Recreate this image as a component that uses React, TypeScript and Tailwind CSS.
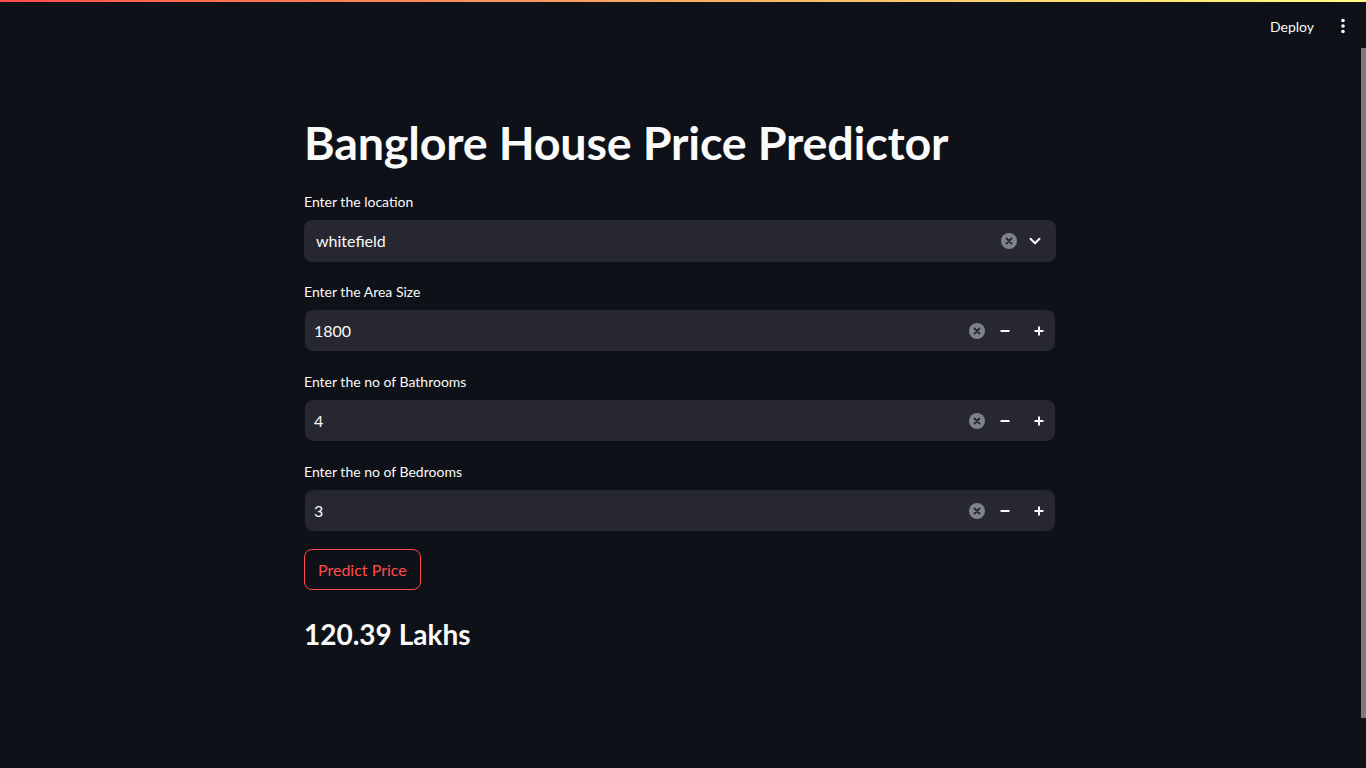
import React from "react";

const ClearIcon = () => (
  <svg width="16" height="16" viewBox="0 0 16 16">
    <circle cx="8" cy="8" r="8" fill="#7f818d" />
    <path d="M5.5 5.5 L10.5 10.5 M10.5 5.5 L5.5 10.5" stroke="#262730" strokeWidth="1.8" strokeLinecap="round" />
  </svg>
);

const Chevron = () => (
  <svg width="14" height="14" viewBox="0 0 14 14">
    <path d="M2.5 4.8 L7 9.2 L11.5 4.8" stroke="#fafafa" strokeWidth="2" fill="none" strokeLinecap="round" strokeLinejoin="round" />
  </svg>
);

const Minus = () => (
  <svg width="12" height="12" viewBox="0 0 12 12">
    <path d="M1.5 6 H10.5" stroke="#fafafa" strokeWidth="2" />
  </svg>
);

const Plus = () => (
  <svg width="12" height="12" viewBox="0 0 12 12">
    <path d="M1.5 6 H10.5 M6 1.5 V10.5" stroke="#fafafa" strokeWidth="2" />
  </svg>
);

const NumberField = ({ label, value }: { label: string; value: string }) => (
  <div className="flex flex-col">
    <div className="h-[18px] text-[14px] leading-[18px] text-[#fafafa]">{label}</div>
    <div className="mt-[9px] mx-px flex h-[41px] items-center rounded-lg bg-[#262730]">
      <div className="flex-1 pl-[9px] text-[16px] text-[#fafafa]">{value}</div>
      <ClearIcon />
      <div className="ml-[4px] flex w-[32px] justify-center">
        <Minus />
      </div>
      <div className="ml-[2px] flex w-[32px] justify-center">
        <Plus />
      </div>
    </div>
  </div>
);

const App = () => {
  return (
    <div className="relative h-[768px] w-full overflow-hidden bg-[#0e1117] font-[Lato,sans-serif]">
      <div className="absolute left-0 right-0 top-0 h-[2px] bg-gradient-to-r from-[#ff4b4b] to-[#ffff80]" />
      <div className="flex h-[52px] items-center justify-end gap-[27px] pr-[21px]">
        <span className="text-[14px] text-[#fafafa]">Deploy</span>
        <svg width="4" height="16" viewBox="0 0 4 16">
          <circle cx="2" cy="2.5" r="1.8" fill="#fafafa" />
          <circle cx="2" cy="8" r="1.8" fill="#fafafa" />
          <circle cx="2" cy="13.5" r="1.8" fill="#fafafa" />
        </svg>
      </div>
      <div className="absolute right-0 top-[48px] h-[670px] w-[5px] bg-[#7a7a7a]" />

      <div className="pr-[6px]">
        <div className="mx-auto flex w-[752px] flex-col pt-[61px]">
          <h1 className="text-[46.7px] font-bold leading-[58px] tracking-[-0.2px] text-[#fafafa]">
            Banglore House Price Predictor
          </h1>

          <div className="mt-[22px] flex flex-col">
            <div className="h-[18px] text-[14px] leading-[18px] text-[#fafafa]">Enter the location</div>
            <div className="mt-[9px] flex h-[42px] items-center rounded-lg bg-[#262730]">
              <div className="flex-1 pl-[12px] text-[16px] text-[#fafafa]">whitefield</div>
              <ClearIcon />
              <div className="ml-[2px] flex w-[32px] justify-center">
                <Chevron />
              </div>
              <div className="w-[5px]" />
            </div>
          </div>

          <div className="mt-[21px] flex flex-col gap-[22px]">
            <NumberField label="Enter the Area Size" value="1800" />
            <NumberField label="Enter the no of Bathrooms" value="4" />
            <NumberField label="Enter the no of Bedrooms" value="3" />
          </div>

          <div className="mt-[18px]">
            <button className="h-[41px] rounded-lg border border-[#ff4b4b] bg-transparent px-[13px] text-[16px] text-[#ff4b4b]">
              Predict Price
            </button>
          </div>

          <h3 className="mt-[26px] text-[28px] font-bold leading-[36px] text-[#fafafa]">120.39 Lakhs</h3>
        </div>
      </div>
    </div>
  );
};

export default App;
